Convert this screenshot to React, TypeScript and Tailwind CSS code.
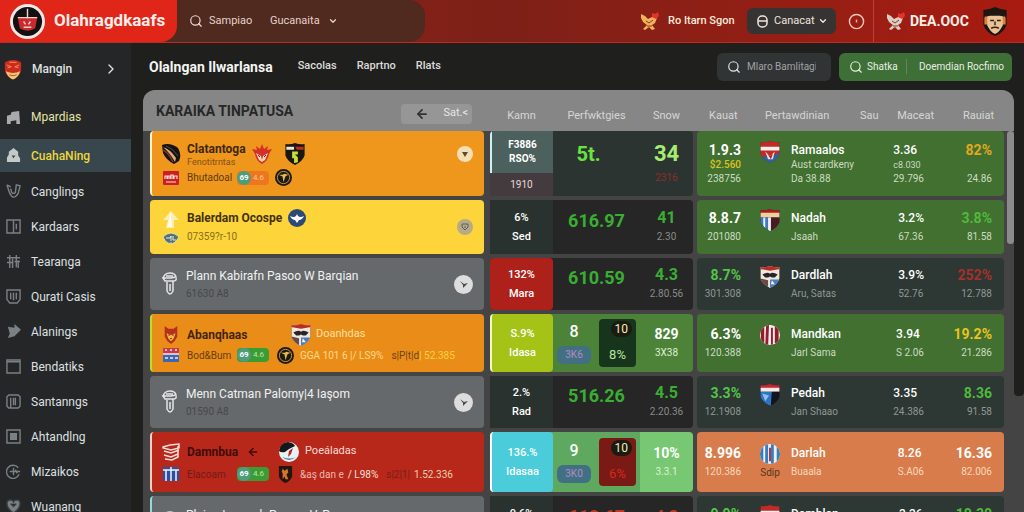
import type { ReactNode } from "react";
import { ArrowLeft, ChevronDown, ChevronRight, Search } from "lucide-react";

type Kind =
  | "redWhite"
  | "blueRed"
  | "eagle"
  | "stripesRed"
  | "halfBlue"
  | "stripesBlue";

const Crest = ({ kind }: { kind: Kind }) => {
  const round = kind === "stripesRed" || kind === "stripesBlue";
  const shape = round
    ? "M11 1a10.500 10.500 0 1 1 0 21a10.500 10.500 0 1 1 0-21Z"
    : "M1 2Q6 3 11 1Q16 3 21 2V14Q19 20 11 24Q3 20 1 14Z";
  return (
    <svg viewBox="0 0 22 25" className="h-6 w-[22px] shrink-0">
      <clipPath id={`crest-${kind}`}>
        <path d={shape} />
      </clipPath>
      <g clipPath={`url(#crest-${kind})`}>
        <rect width="22" height="25" fill={round ? "#f1eef0" : "#20283a"} />
        {kind === "redWhite" && (
          <>
            <rect width="22" height="25" fill="#c22a28" />
            <path d="M0 7H22V11H0Z" fill="#f5f0ea" />
            <path d="M1 15Q8 21 21 13V25H0Z" fill="#2c63a8" />
            <path d="M6 12l5 5 5-5-2 8H9Z" fill="#eddcd2" />
            <path d="M8 14l3 3 3-3-2 6Z" fill="#a51d20" />
          </>
        )}
        {kind === "blueRed" && (
          <>
            <rect width="22" height="6" fill="#a81f1f" />
            <path d="M0 5H22V10H0Z" fill="#f2cf9c" />
            <path d="M0 10H12V24H0Z" fill="#3f79bb" />
            <path d="M4 10H6V23H4ZM9 10H12V24H9Z" fill="#eef2f5" />
            <path d="M12 10H22V24H12Z" fill="#4b1a22" />
          </>
        )}
        {kind === "eagle" && (
          <>
            <rect width="22" height="25" fill="#f2e6d8" />
            <path d="M0 0H22V4L11 6L0 4Z" fill="#b92b27" />
            <path d="M3 10Q8 7 11 9Q14 7 19 10L16 13H13L11 12L9 13H6Z" fill="#28242b" />
            <path d="M1 14L9 16V23H3Z" fill="#6a4a46" />
            <path d="M11 15H21L18 22L11 24Z" fill="#4b7ec0" />
            <path d="M13 16L16 20H12Z" fill="#f3f3f3" />
          </>
        )}
        {kind === "stripesRed" && (
          <path
            d="M1 4L5 1V20H2ZM7 0H10L9 24H6ZM12 4H14V22H12ZM16 1H20V20H16Z"
            fill="#941c2c"
          />
        )}
        {kind === "halfBlue" && (
          <>
            <rect width="22" height="7" fill="#c9242c" />
            <path d="M0 5H22V9H0Z" fill="#f4e9e4" />
            <path d="M0 9H13L12 24L0 19Z" fill="#2f74c4" />
            <path d="M3 11L10 13L6 19Z" fill="#8fc0ec" />
            <path d="M13 9H22V24H12Z" fill="#11151f" />
          </>
        )}
        {kind === "stripesBlue" && (
          <>
            <path
              d="M0 0H4V24H0ZM6 0H9V24H6ZM12 0H15V24H12ZM18 0H22V24H18Z"
              fill="#3480bf"
            />
            <path d="M10 5H12V19H10Z" fill="#a83448" />
          </>
        )}
      </g>
    </svg>
  );
};

const Wings = () => (
  <svg viewBox="0 0 20 20" className="size-5">
    <path d="M1 1Q9 -2 17 4Q21 11 18 17L13 20Q5 16 2 9Z" fill="#151313" />
    <path d="M2 3Q9 5 15 14L14 18Q9 9 2 3Z" fill="#d9ab72" />
    <path d="M2 6Q8 9 12 18" stroke="#83322a" strokeWidth="1.500" fill="none" />
    <path d="M5 2Q12 4 17 12" stroke="#5c4a3c" fill="none" />
  </svg>
);

const Phoenix = () => (
  <svg viewBox="0 0 20 20" className="size-5">
    <path
      d="M10 0L12 5L16 2L15 6L20 5L17 10Q16 17 10 20Q4 17 3 10L0 5L5 6L4 2L8 5Z"
      fill="#d62f2a"
    />
    <path d="M4 9L9 12L10 16L11 12L16 9L13 16L10 18L7 16Z" fill="#f6d9bb" />
    <path d="M6 11l2 2M14 11l-2 2" stroke="#7c1a18" />
  </svg>
);

const DarkShield = () => (
  <svg viewBox="0 0 22 25" className="h-6 w-[22px]">
    <path d="M1 2Q6 3 11 1Q16 3 21 2V14Q19 20 11 24Q3 20 1 14Z" fill="#191712" />
    <path d="M2 5H10V8H2Z" fill="#efe3d8" />
    <path d="M11 5H20V8H13Z" fill="#c32924" />
    <path d="M8 10H14V13H11L14 16V21L10 22V17H8Z" fill="#cbdc38" />
  </svg>
);

const RedTag = () => (
  <svg viewBox="0 0 16 14" className="h-[14px] w-4">
    <rect width="16" height="14" rx="1" fill="#ca2021" />
    <path
      d="M2 8V5h2v3M5 8V5h2v3M8 8V4h2v4M11 8V5h3v3M3 11h10"
      stroke="#f7dcd5"
      strokeWidth="1.200"
      fill="none"
    />
  </svg>
);

const Roundel = () => (
  <svg viewBox="0 0 18 18" className="size-[17px]">
    <circle cx="9" cy="9" r="9" fill="#1d1a16" />
    <circle cx="9" cy="9" r="6.500" fill="none" stroke="#c99a3a" />
    <path d="M4 6L8 8L9 14L11 8L14 6L10 5L8 6Z" fill="#e6b94a" />
  </svg>
);

const LionShield = () => (
  <svg viewBox="0 0 18 18" className="size-[17px]">
    <path d="M2 0H16V11Q14 16 9 18Q4 16 2 11Z" fill="#25150f" />
    <path d="M6 3L8 5L11 3L12 7L10 9L12 14H9L8 11L6 14V8L5 6Z" fill="#d3752b" />
  </svg>
);

const BirdBadge = () => (
  <svg viewBox="0 0 18 18" className="size-[18px]">
    <circle cx="9" cy="9" r="9" fill="#2c4a78" />
    <path d="M2 7Q6 9 8 7L9 5L10 7Q12 9 16 7Q14 11 11 11L9 14L7 11Q4 11 2 7Z" fill="#fff" />
  </svg>
);

const UpArrow = () => (
  <svg viewBox="0 0 20 20" className="size-5">
    <path d="M10 1L18 10H13V18H5L7 10H2Z" fill="#f6eeb4" />
    <path d="M10 1L11 17H6L8 9Z" fill="#fffbe0" />
  </svg>
);

const Oval = () => (
  <svg viewBox="0 0 18 12" className="h-3 w-[18px]">
    <path d="M1 5Q9 -3 17 5Q12 13 9 11Q5 13 1 5Z" fill="#51707a" stroke="#dfe0a8" />
    <path d="M4 6h4l1-2v5M11 4v4h3" stroke="#e8ecd8" fill="none" />
  </svg>
);

const Outline = () => (
  <svg
    viewBox="0 0 18 26"
    className="h-[26px] w-[18px]"
    fill="none"
    stroke="#e4e6e6"
    strokeWidth="1.500"
  >
    <path d="M2 8Q3 2 9 2Q14 2 15 6L10 7H2L4 10H12Q16 10 15 7M5 5H12" />
    <path d="M6 11V20Q9 26 12 20V10M9 13V20" />
  </svg>
);

const Fox = () => (
  <svg viewBox="0 0 18 20" className="h-[18px] w-5">
    <path d="M2 0L6 3H12L16 0V12Q14 17 9 20Q4 17 2 12Z" fill="#b5301f" />
    <path d="M4 8L9 10L14 8L12 14L9 17L6 14Z" fill="#f0bb3c" />
    <path d="M6 10h2M10 10h2M8 14h2" stroke="#6b1b10" />
  </svg>
);

const Flag = ({ tone }: { tone: "red" | "blue" }) => (
  <svg viewBox="0 0 16 14" className="h-[14px] w-4">
    <rect width="16" height="14" fill={tone === "red" ? "#c83b49" : "#2e4fa0"} />
    {tone === "red" ? (
      <>
        <rect y="6" width="16" height="8" fill="#3f66b0" />
        <path d="M0 6H16M2 2h2M7 2h2M12 2h2M2 10h3M7 10h3M12 10h3" stroke="#f3e9ef" strokeWidth="1.500" />
      </>
    ) : (
      <path d="M3 3V14M8 0V14M13 3V14M0 3H16" stroke="#f0f2f7" strokeWidth="1.500" />
    )}
  </svg>
);

const Ball = () => (
  <svg viewBox="0 0 20 20" className="size-5">
    <circle cx="10" cy="10" r="10" fill="#e9f1f3" />
    <path d="M0 9Q1 1 9 0Q15 1 16 4L10 7L6 10Q2 11 0 9Z" fill="#15181b" />
    <path d="M10 9L14 6L12 12L9 15Z" fill="#b3252c" />
    <path d="M3 15Q10 21 17 15Q12 18 3 15Z" fill="#3d7ea0" />
  </svg>
);

const RedStack = () => (
  <svg viewBox="0 0 18 18" className="size-[18px]" fill="none" stroke="#f6dcd8" strokeWidth="1.500">
    <path d="M1 4L8 2L17 1V5L9 7L1 5ZM2 8L9 10L17 7M2 12L9 14L16 11M3 16L10 17L16 14V3" />
  </svg>
);

const TrophyBadge = ({ tone }: { tone: string }) => (
  <svg viewBox="0 0 20 20" className="size-5 shrink-0">
    <path d="M1 3L5 5L8 8L12 6L17 7L15 12L12 14L15 18L12 19L9 16L5 19L3 18L7 14L3 11L1 7Z" fill={tone} />
    <path d="M6 10L9 12L13 9M7 15H12" stroke="#8b3a1e" fill="none" />
    <path d="M12 2L15 3L18 1L19 5L16 8L12 6Z" fill="#e5322b" />
  </svg>
);

const Mascot = () => (
  <svg viewBox="0 0 26 30" className="h-[29px] w-[26px] shrink-0">
    <path d="M1 3Q7 3 13 0Q19 3 25 3V18Q23 26 13 30Q3 26 1 18Z" fill="#1b1613" />
    <path d="M2 12Q2 9 5 8L21 8Q24 9 24 12V18H2Z" fill="#d9823b" />
    <path d="M5 9Q13 6 21 9V19Q18 26 13 28Q8 26 5 19Z" fill="#eac394" />
    <path d="M3 5Q13 1 23 5V10L18 9H8L3 10Z" fill="#201713" />
    <path d="M8 14h4M15 14h4M13 15v4M9 22Q13 20 17 22" stroke="#33211a" strokeWidth="1.500" fill="none" />
  </svg>
);

/* sidebar glyphs, filled or stroked with the current colour */
const glyphs: Record<string, ReactNode> = {
  seat: <path d="M6 2L14 1L15 15H11V11L5 12V15H1V6L5 5Z" fill="currentColor" stroke="none" />,
  house: (
    <>
      <path d="M8 0L13 4V8L15 11V15H1V10L3 7V4Z" fill="currentColor" stroke="none" />
      <path d="M6 8h4l-2 3Z" fill="#37474d" stroke="none" />
    </>
  ),
  medal: <path d="M1 1L4 10Q8 18 13 10L15 2L11 1L10 9Q8 11 6 9L5 5M1 1L5 3" />,
  columns: <path d="M1 1H15V15H1ZM8 1V15M11 5V11" />,
  people: <path d="M1 4H15M4 1V15M7 5V15M11 1V14M13 7V15M1 9H8M9 8H15" />,
  shield: <path d="M1 1H15V11L12 15H4L1 11ZM5 4V11M8 4V12M11 4V11" />,
  pointer: <path d="M2 3L9 4L9 0L16 6L9 13L2 15L4 10Z" fill="currentColor" stroke="none" />,
  box: <path d="M1 1H15V15H1ZM1 3H15" />,
  cards: <path d="M3 1H13L15 3V13L13 15H3L1 13V3ZM5 4V15M8 4V12M10 4V12" />,
  frame: (
    <>
      <path d="M1 1H15V15H1Z" />
      <path d="M5 5H11V11H5Z" fill="currentColor" />
    </>
  ),
  clock: <path d="M13 4A7 7 0 1 0 14 11M8 4V12M4 8H15M10 6L12 10" />,
  heart: (
    <path
      d="M8 15Q1 10 1 5Q1 1 5 1Q7 1 8 3Q9 1 12 1Q15 1 15 5Q15 10 8 15ZM5 5L8 8L11 5"
      fill="currentColor"
      stroke="#3a4145"
    />
  ),
};

const menu = [
  { icon: "medal", label: "Canglings" },
  { icon: "columns", label: "Kardaars" },
  { icon: "people", label: "Tearanga" },
  { icon: "shield", label: "Qurati Casis" },
  { icon: "pointer", label: "Alanings" },
  { icon: "box", label: "Bendatiks" },
  { icon: "cards", label: "Santanngs" },
  { icon: "frame", label: "Ahtandlng" },
  { icon: "clock", label: "Mizaikos" },
  { icon: "heart", label: "Wuanang" },
];

const Glyph = ({ name }: { name: string }) => (
  <svg
    viewBox="0 0 16 16"
    className="size-[15px] shrink-0"
    fill="none"
    stroke="currentColor"
    strokeWidth="1.500"
  >
    {glyphs[name]}
  </svg>
);

const Pill = ({ orange }: { orange?: boolean }) => (
  <span
    className={
      orange
        ? "flex h-[14px] w-8 items-center gap-0.5 rounded bg-[#ee7620] text-[8px] text-[#fbc98f]"
        : "flex h-[14px] w-8 items-center gap-0.5 rounded bg-[#3b9b35] text-[8px] text-[#bfe6a5]"
    }
  >
    <span className="flex size-[14px] items-center justify-center rounded-full bg-[#4d9d7c] font-bold text-white">
      69
    </span>
    4.6
  </span>
);

const Toggle = ({ pale }: { pale?: boolean }) => (
  <button
    type="button"
    aria-label="Expand row"
    className={
      pale
        ? "flex size-[19px] shrink-0 items-center justify-center rounded-full bg-[#dcdddc] text-[#4a4a4a]"
        : "flex size-4 shrink-0 items-center justify-center rounded-full bg-[#f5dfb4] text-[#5c4a2c]"
    }
  >
    <svg viewBox="0 0 10 10" className="size-2.5" fill="currentColor">
      {pale ? <path d="M1 2L5 5L9 4L6 7L4 9L4 6Z" /> : <path d="M2 3H8L5 8Z" />}
    </svg>
  </button>
);

const Plain = ({ title, code }: { title: string; code: string }) => (
  <div className="flex items-center gap-[7px]">
    <Outline />
    <div className="min-w-0 flex-1">
      <div className="text-xs leading-5 text-[#f0f1f1]">{title}</div>
      <div className="text-[10px] leading-4 text-[#45484a]">{code}</div>
    </div>
    <Toggle pale />
  </div>
);

const sub = "text-[10px] leading-[18px]";

type Row = {
  height: string;
  team: ReactNode;
  teamBg: string;
  form: ReactNode;
  formBg: string;
  odds: ReactNode;
  midBg: string;
  score: ReactNode;
  scoreBg?: string;
  rate: [string, string];
  rateColor: string;
  extra?: boolean;
  crest: Kind;
  crestNote?: string;
  club: [string, string];
  market: [string, string];
  result: [string, string];
  resultColor: string;
  bg: string;
  muted: string;
};

const Chips = ({ dark }: { dark: boolean }) => (
  <div className="flex items-center justify-between gap-1.5 px-1">
    <div className="flex flex-col items-center gap-1">
      <span className="text-base leading-5 font-medium text-white">{dark ? "8" : "9"}</span>
      <span className="w-[34px] rounded-md bg-[#417084] text-center text-[10px] leading-[18px] text-[#b58ac2]">
        {dark ? "3K6" : "3K0"}
      </span>
    </div>
    <div
      className={
        dark
          ? "flex h-12 w-[37px] flex-col justify-between rounded bg-[#17341c] py-0.5 text-center text-[#b7e89e]"
          : "flex h-12 w-[37px] flex-col justify-between rounded bg-[#791a15] py-0.5 text-center text-[#d5281f]"
      }
    >
      <span className="mr-1 ml-auto rounded-full bg-[#1c1b12] px-1 text-xs leading-4 text-[#f2eebb]">
        10
      </span>
      <span className="text-[13px] leading-5">{dark ? "8%" : "6%"}</span>
    </div>
  </div>
);

const rows: Row[] = [
  {
    height: "h-[65px]",
    teamBg: "border-l-2 border-[#fff3c4] bg-[#ee971c] pl-[9px]",
    team: (
      <>
        <div className="flex items-center">
          <Wings />
          <div className="ml-1.5 w-[65px]">
            <div className="text-xs leading-4 font-bold text-[#40260c]">Clatantoga</div>
            <div className="text-[9px] leading-[10px] text-[#855015]">Fenotitrntas</div>
          </div>
          <Phoenix />
          <span className="ml-3">
            <DarkShield />
          </span>
          <span className="ml-auto">
            <Toggle />
          </span>
        </div>
        <div className="mt-0.5 flex items-center">
          <span className="ml-0.5 w-6">
            <RedTag />
          </span>
          <span className="w-[50px] text-[10px] leading-4 text-[#5b3a10]">Bhutadoal</span>
          <Pill orange />
          <span className="ml-1.5">
            <Roundel />
          </span>
        </div>
      </>
    ),
    formBg: "",
    form: (
      <div className="flex h-full flex-col overflow-hidden rounded-l-sm text-center">
        <div className="flex flex-1 flex-col justify-center border-l-2 border-[#c9f3ee] bg-[#4c605d] text-[10px] leading-[14px] font-bold text-white">
          <span>F3886</span>
          <span>RSO%</span>
        </div>
        <div className="bg-[#443b3e] text-[10px] leading-[23px] text-[#e9dada]">1910</div>
      </div>
    ),
    midBg: "bg-[#2c3431]",
    odds: <div className="-mt-5 w-full pr-4 text-center text-xl leading-5 font-bold text-[#6be244]">5t.</div>,
    score: (
      <>
        <div className="text-[22px] leading-6 font-bold text-[#a4ee6f]">34</div>
        <div className="mt-1 text-[10px] leading-4 text-[#8f2c27]">2316</div>
      </>
    ),
    rate: ["1.9.3", "238756"],
    rateColor: "text-white",
    extra: true,
    crest: "redWhite",
    club: ["Ramaalos", "Da 38.88"],
    market: ["3.36", "29.796"],
    result: ["82%", "24.86"],
    resultColor: "text-[#e2a81d]",
    bg: "bg-[#417031]",
    muted: "text-[#cbdcc0]",
  },
  {
    height: "h-[54px]",
    teamBg: "bg-[#fdd43a] pl-[11px]",
    team: (
      <div className="flex items-center">
        <div className="flex w-5 flex-col items-center gap-0.5">
          <UpArrow />
          <Oval />
        </div>
        <div className="ml-1.5 flex-1">
          <div className="flex items-center gap-1.5">
            <span className="text-xs leading-5 font-bold text-[#43310c]">Balerdam Ocospe</span>
            <BirdBadge />
          </div>
          <div className="text-[10px] leading-[18px] text-[#84701f]">07359?r-10</div>
        </div>
        <button
          type="button"
          aria-label="Expand row"
          className="flex size-4 items-center justify-center rounded-full bg-[#b5ac86] text-[#5b5e5a]"
        >
          <svg viewBox="0 0 10 10" className="size-2.5" fill="none" stroke="currentColor">
            <path d="M2 2H8V5L5 8L2 5ZM5 4V6" />
          </svg>
        </button>
      </div>
    ),
    formBg: "bg-[#29322f]",
    form: <Form top="6%" bottom="Sed" />,
    midBg: "bg-[#252625]",
    odds: <Odds value="616.97" />,
    score: <Score top="41" bottom="2.30" />,
    rate: ["8.8.7", "201080"],
    rateColor: "text-white",
    crest: "blueRed",
    club: ["Nadah", "Jsaah"],
    market: ["3.2%", "67.36"],
    result: ["3.8%", "81.58"],
    resultColor: "text-[#4fbb3b]",
    bg: "bg-[#417031]",
    muted: "text-[#cbdcc0]",
  },
  {
    height: "h-[52px]",
    teamBg: "bg-[#66696b] pl-[11px]",
    team: <Plain title="Plann Kabirafn Pasoo W Barqian" code="61630 A8" />,
    formBg: "rounded bg-[#ae201a]",
    form: <Form top="132%" bottom="Mara" />,
    midBg: "bg-[#252625]",
    odds: <Odds value="610.59" />,
    score: <Score top="4.3" bottom="2.80.56" />,
    rate: ["8.7%", "301.308"],
    rateColor: "text-[#54c548]",
    crest: "eagle",
    club: ["Dardlah", "Aru, Satas"],
    market: ["3.9%", "52.76"],
    result: ["252%", "12.788"],
    resultColor: "text-[#a72f2a]",
    bg: "bg-[#2d3733]",
    muted: "text-[#8f9894]",
  },
  {
    height: "h-[58px]",
    teamBg: "border-l-2 border-[#b6e02a] bg-[#ea8d18] pl-[9px]",
    team: (
      <>
        <div className="flex items-center">
          <Fox />
          <span className="ml-1.5 w-[103px] text-xs leading-5 font-bold text-[#42250c]">Abanqhaas</span>
          <Crest kind="eagle" />
          <span className="ml-1 text-[11px] text-[#fbe0a4]">Doanhdas</span>
        </div>
        <div className="flex items-center">
          <span className="ml-0.5 w-6">
            <Flag tone="red" />
          </span>
          <span className="w-[50px] text-[10px] text-[#673d10]">Bod&amp;Bum</span>
          <Pill />
          <span className="mr-1.5 ml-2">
            <Roundel />
          </span>
          <span className="text-[10px] text-[#fbd98f]">GGA 101 6 |/ LS9%</span>
          <span className="ml-2 text-[10px] text-[#6b4317]">s|P|t|d</span>
          <span className="text-[10px] text-[#f6d33f]">| 52.385</span>
        </div>
      </>
    ),
    formBg: "rounded border-l-2 border-[#f2f8c8] bg-[#a5c216]",
    form: <Form top="S.9%" bottom="Idasa" />,
    midBg: "bg-[#4d8338]",
    odds: <Chips dark />,
    score: <Score top="829" bottom="3X38" white />,
    rate: ["6.3%", "120.388"],
    rateColor: "text-white",
    crest: "stripesRed",
    club: ["Mandkan", "Jarl Sama"],
    market: ["3.94", "S 2.06"],
    result: ["19.2%", "21.286"],
    resultColor: "text-[#ebc31c]",
    bg: "bg-[#417031]",
    muted: "text-[#cbdcc0]",
  },
  {
    height: "h-[52px]",
    teamBg: "bg-[#66696b] pl-[11px]",
    team: <Plain title="Menn Catman Palomy|4 Iaşom" code="01590 A8" />,
    formBg: "bg-[#29322f]",
    form: <Form top="2.%" bottom="Rad" />,
    midBg: "bg-[#252625]",
    odds: <Odds value="516.26" />,
    score: <Score top="4.5" bottom="2.20.36" />,
    rate: ["3.3%", "12.1908"],
    rateColor: "text-[#54c548]",
    crest: "halfBlue",
    club: ["Pedah", "Jan Shaao"],
    market: ["3.35", "24.386"],
    result: ["8.36", "91.58"],
    resultColor: "text-[#4fbb3b]",
    bg: "bg-[#2d3733]",
    muted: "text-[#8f9894]",
  },
  {
    height: "h-[60px]",
    teamBg: "border-l-2 border-[#f7cfc6] bg-[#b7281b] pl-[9px]",
    team: (
      <>
        <div className="flex items-center">
          <span className="ml-px w-[25px]">
            <RedStack />
          </span>
          <span className="w-[60px] text-xs leading-5 font-bold text-[#3f0e0b]">Damnbua</span>
          <ArrowLeft className="mr-5 size-3 text-[#3f0e0b]" strokeWidth={3} />
          <Ball />
          <span className="ml-1.5 text-[11px] text-[#f8dcd4]">Poeáladas</span>
        </div>
        <div className="mt-1 flex items-center">
          <span className="ml-0.5 w-6">
            <Flag tone="blue" />
          </span>
          <span className="w-[50px] text-[10px] text-[#761a13]">Elacoam</span>
          <Pill />
          <span className="mr-1.5 ml-2">
            <LionShield />
          </span>
          <span className="text-[10px] text-[#efb9ac]">&amp;aş dan e</span>
          <span className="ml-1 text-[10px] text-[#f7e0d9]">/ L98%</span>
          <span className="ml-2 text-[10px] text-[#7c1c14]">s|2|1|</span>
          <span className="ml-1 text-[10px] text-[#f4cda9]">1.52.336</span>
        </div>
      </>
    ),
    formBg: "rounded border-l-2 border-white bg-[#4accda]",
    form: <Form top="136.%" bottom="Idasaa" />,
    midBg: "bg-[#5ea860]",
    odds: <Chips dark={false} />,
    score: <Score top="10%" bottom="3.3.1" white />,
    scoreBg: "bg-[#78c873]",
    rate: ["8.996", "120.386"],
    rateColor: "text-white",
    crest: "stripesBlue",
    crestNote: "Sdip",
    club: ["Darlah", "Buaala"],
    market: ["8.26", "S.A06"],
    result: ["16.36", "82.006"],
    resultColor: "text-white",
    bg: "bg-[#d97c4b]",
    muted: "text-[#f7d8bd]",
  },
  {
    height: "h-[54px]",
    teamBg: "border-l-2 border-[#8fdcd8] bg-[#66696b] pl-[9px]",
    team: <Plain title="Plainn Iamamh Pasom V. Paqam" code="61630 A8" />,
    formBg: "bg-[#29322f]",
    form: <Form top="0.6%" bottom="Sed" />,
    midBg: "bg-[#252625]",
    odds: (
      <div className="-mt-3 w-full text-center text-lg leading-[22px] font-bold text-[#c2371f]">618.67</div>
    ),
    score: <div className="-mt-3 text-base leading-5 font-bold text-[#c2371f]">4.3</div>,
    rate: ["9.9%", "120.386"],
    rateColor: "text-[#54c548]",
    crest: "redWhite",
    club: ["Damhlan", "Aru, Satas"],
    market: ["3.36", "52.76"],
    result: ["10.30", "12.788"],
    resultColor: "text-[#4fbb3b]",
    bg: "bg-[#2d3733]",
    muted: "text-[#8f9894]",
  },
];

function Form({ top, bottom }: { top: string; bottom: string }) {
  return (
    <div className="text-center text-[11px] font-medium text-white">
      <div className="leading-5">{top}</div>
      <div className="leading-[18px]">{bottom}</div>
    </div>
  );
}

function Odds({ value }: { value: string }) {
  return (
    <div className="-mt-3 w-full text-center text-lg leading-[22px] font-bold text-[#39ae32]">{value}</div>
  );
}

function Score({ top, bottom, white }: { top: string; bottom: string; white?: boolean }) {
  return (
    <>
      <div
        className={
          white
            ? "text-sm leading-5 font-bold text-white"
            : "text-base leading-5 font-bold text-[#39ae32]"
        }
      >
        {top}
      </div>
      <div className={white ? `${sub} text-[#dcf0d4]` : `${sub} text-[#898b89]`}>{bottom}</div>
    </>
  );
}

const grid = "grid grid-cols-[334fr_69fr_87fr_53fr_64fr_95fr_32fr_60fr_60fr]";
const cell = "flex min-w-0 flex-col justify-center whitespace-nowrap";
const head = "flex min-w-0 items-center pt-3 text-[11px] font-normal text-[#d6d6d6]";

const TopBar = () => (
  <header className="flex h-[43px] shrink-0 items-center border-b border-[#c02a20] bg-linear-to-r from-[#8f2418] via-[#7e2017] to-[#a81b10]">
    <div className="flex h-full min-w-[425px] items-center rounded-r-2xl bg-[#50291f]">
      <a
        href="#"
        className="flex h-full w-[177px] items-center gap-[9px] rounded-br-2xl bg-[#e02519] pl-2.5 text-[17px] font-bold text-[#fdeeea]"
      >
        <svg viewBox="0 0 36 36" className="size-[35px] shrink-0">
          <circle cx="18" cy="18" r="18" fill="#f2e9e6" />
          <circle cx="18" cy="18" r="15" fill="#121011" />
          <path d="M8 14H28L26 25Q18 30 10 25Z" fill="#c9292b" />
          <path d="M8 14H28M18 5V15M14 18l2 3M21 18l-2 3M14 24h8" stroke="#f0d2cd" strokeWidth="1.500" />
        </svg>
        Olahragdkaafs
      </a>
      <label className="ml-3 flex items-center gap-1.5 text-[#efdcd6]">
        <Search className="size-[14px]" />
        <input
          type="search"
          aria-label="Search"
          placeholder="Sampiao"
          className="w-[61px] text-[11px] placeholder:text-[#e5d3cd]"
        />
      </label>
      <label className="flex items-center text-[#e5d3cd]">
        <select aria-label="Category" className="w-[58px] appearance-none text-[11px]">
          <option>Gucanaita</option>
        </select>
        <ChevronDown className="size-[10px]" strokeWidth={3} />
      </label>
    </div>
    <div className="flex h-full flex-1 items-center justify-end pr-4 text-[#fbe9d9]">
      <TrophyBadge tone="#f0b35c" />
      <a href="#" className="ml-2 w-[79px] text-[11px] font-medium whitespace-nowrap">
        Ro Itarn Sgon
      </a>
      <div className="flex h-[26px] w-[89px] items-center rounded-md bg-[#363433] pl-2.5">
        <svg viewBox="0 0 11 13" className="h-[13px] w-[11px]" fill="none" stroke="#efe5df" strokeWidth="1.500">
          <rect x="1" y="1" width="9" height="11" rx="4" />
          <path d="M1 6H10" />
        </svg>
        <select aria-label="Account" className="ml-1.5 w-[44px] appearance-none text-[11px] text-[#efe5df]">
          <option>Canacat</option>
        </select>
        <ChevronDown className="size-[10px]" strokeWidth={3} />
      </div>
      <button type="button" aria-label="History" className="ml-3 text-[#f2c9b9]">
        <svg viewBox="0 0 18 18" className="size-[17px]" fill="none" stroke="currentColor" strokeWidth="1.500">
          <circle cx="9" cy="9" r="7.500" />
          <path d="M9 7V10" />
        </svg>
      </button>
      <span className="mr-3 ml-2 h-full w-px bg-[#c0402f]" />
      <TrophyBadge tone="#d9cfc6" />
      <span className="ml-1 w-[72px] text-sm font-bold text-[#fbeee8]">DEA.OOC</span>
      <Mascot />
    </div>
  </header>
);

const Sidebar = () => (
  <nav className="w-[131px] shrink-0 bg-[#242628] text-xs text-[#dfe0e0]">
    <a href="#" className="mb-1 flex h-[52px] items-center pr-3 pl-1 font-medium">
      <svg viewBox="0 0 20 22" className="h-[21px] w-[18px]">
        <path d="M1 3Q10 -2 19 3V12Q17 20 10 22Q3 20 1 12Z" fill="#cf2a22" />
        <path d="M3 6l5 2-4 1M17 6l-5 2 4 1M6 3h8" stroke="#f0a24b" fill="none" />
        <path d="M2 13Q10 17 18 13Q16 20 10 22Q4 20 2 13Z" fill="#f1c877" />
        <path d="M6 17Q10 19 14 17" stroke="#a8521f" fill="none" />
      </svg>
      <span className="ml-2.5 flex-1">Mangin</span>
      <ChevronRight className="size-4" />
    </a>
    <a href="#" className="mb-1 flex h-[36px] items-center gap-2.5 pl-1.5 text-[#e5e4a5]">
      <span className="text-[#a9aaab]">
        <Glyph name="seat" />
      </span>
      Mpardias
    </a>
    <a
      href="#"
      aria-current="page"
      className="flex h-[33px] items-center gap-2.5 bg-[#37474d] pl-1.5 font-medium text-[#ebd83c]"
    >
      <span className="text-[#c4c8c6]">
        <Glyph name="house" />
      </span>
      CuahaNing
    </a>
    <ul className="mt-0.5">
      {menu.map((item) => (
        <li key={item.label}>
          <a href="#" className="flex h-[35px] items-center gap-2.5 pl-1.5">
            <span className="text-[#7b8083]">
              <Glyph name={item.icon} />
            </span>
            {item.label}
          </a>
        </li>
      ))}
    </ul>
  </nav>
);

const Toolbar = () => (
  <div className="flex h-[47px] shrink-0 items-center pr-3 pl-[18px] text-[11px] text-[#dcdcda]">
    <h1 className="mr-[25px] text-sm font-bold text-[#f4f4f2]">Olalngan Ilwarlansa</h1>
    <div className="flex gap-5 font-medium">
      <a href="#">Sacolas</a>
      <a href="#">Raprtno</a>
      <a href="#">Rlats</a>
    </div>
    <label className="ml-auto flex h-7 w-[114px] items-center gap-1.5 rounded-md bg-[#313435] pr-1 pl-2.5 text-[#e5e6e5]">
      <Search className="size-[14px] shrink-0" />
      <input
        type="search"
        aria-label="Search teams"
        placeholder="Mlaro Bamlitagi"
        className="w-full min-w-0 text-[10px] placeholder:text-[#a0a3a3]"
      />
    </label>
    <div className="ml-2 flex h-7 w-[173px] items-center rounded-md bg-[#3e6f36] pr-2 pl-2.5 text-[10px] text-[#e7f0e2]">
      <Search className="size-[14px] shrink-0" />
      <button type="button" className="ml-1 w-10 border-r border-[#5f8a58] text-left">
        Shatka
      </button>
      <button type="button" className="flex-1 text-right whitespace-nowrap">
        Doemdian Rocfimo
      </button>
    </div>
  </div>
);

const Board = () => (
  <table className="block min-w-0 flex-1">
    <thead className="block">
      <tr className={`${grid} h-[41px]`}>
        <th className="flex items-center justify-between pr-3 pl-1.5">
          <span className="text-sm font-bold text-[#262828]">KARAIKA TINPATUSA</span>
          <span className="mt-1.5 flex h-5 w-[71px] items-center justify-between rounded bg-[#969696] pr-1 pl-3.5 text-[11px] font-normal text-[#e6e6e6]">
            <button type="button" aria-label="Back">
              <ArrowLeft className="size-3.5 text-[#333]" strokeWidth={3} />
            </button>
            <button type="button">Sat.&lt;</button>
          </span>
        </th>
        <th className={`${head} justify-center pl-1.5`}>Kamn</th>
        <th className={`${head} justify-center`}>Perfwktgies</th>
        <th className={`${head} justify-center`}>Snow</th>
        <th className={`${head} pl-4`}>Kauat</th>
        <th className={`${head} pl-2`}>Pertawdinian</th>
        <th className={`${head} pl-2`}>Sau</th>
        <th className={`${head} justify-end pr-2.5`}>Maceat</th>
        <th className={`${head} justify-end pr-2.5`}>Rauiat</th>
      </tr>
    </thead>
    <tbody className="flex flex-col gap-1">
      {rows.map((row, index) => (
        <tr key={index} className={`${grid} ${row.height}`}>
          <td className={`${cell} rounded pr-[11px] ${row.teamBg}`}>{row.team}</td>
          <td className={`ml-1.5 rounded-l-sm ${row.midBg}`}>
            <div
              className={
                row.formBg ? `flex h-full flex-col justify-center ${row.formBg}` : "h-full"
              }
            >
              {row.form}
            </div>
          </td>
          <td className={`${cell} ${row.midBg}`}>{row.odds}</td>
          <td className={`${cell} items-center rounded-r-sm ${row.scoreBg ?? row.midBg}`}>{row.score}</td>
          <td className={`${cell} ml-1 items-end rounded-l-sm pr-4 ${row.bg}`}>
            <div className={`text-sm leading-5 font-bold ${row.rateColor}`}>{row.rate[0]}</div>
            {row.extra && (
              <div className="text-[10px] leading-[10px] font-medium text-[#dfc221]">$2.560</div>
            )}
            <div className={`${sub} ${row.muted}`}>{row.rate[1]}</div>
          </td>
          <td className={`${cell} ${row.bg}`}>
            <div className="flex gap-2.5 pl-0.5">
              <div className="text-center text-[10px] leading-3 text-[#59331f]">
                <Crest kind={row.crest} />
                {row.crestNote}
              </div>
              <div>
                <div className="text-xs leading-5 font-medium text-white">{row.club[0]}</div>
                {row.extra && (
                  <div className={`text-[10px] leading-[10px] ${row.muted}`}>Aust cardkeny</div>
                )}
                <div className={`${sub} ${row.muted}`}>{row.club[1]}</div>
              </div>
            </div>
          </td>
          <td className={`-z-10 ${row.bg}`}></td>
          <td className={`${cell} items-end pr-5 ${row.bg}`}>
            <div>
              <div className="text-xs leading-5 font-medium text-white">{row.market[0]}</div>
              {row.extra && <div className={`text-[9px] leading-[10px] ${row.muted}`}>c8.030</div>}
              <div className={`${sub} ${row.muted}`}>{row.market[1]}</div>
            </div>
          </td>
          <td className={`${cell} items-end rounded-r-sm pr-3 ${row.bg}`}>
            <div className={`text-sm leading-5 font-bold ${row.resultColor}`}>{row.result[0]}</div>
            {row.extra && <div className="h-2.5" />}
            <div className={`${sub} ${row.muted}`}>{row.result[1]}</div>
          </td>
        </tr>
      ))}
    </tbody>
  </table>
);

const App = () => {
  return (
    <div className="flex h-screen flex-col overflow-hidden bg-[#1f201e] font-['Roboto',sans-serif]">
      <TopBar />
      <div className="flex min-h-0 flex-1">
        <Sidebar />
        <main className="flex min-w-0 flex-1 flex-col overflow-hidden">
          <Toolbar />
          <div className="ml-3 flex min-h-0 flex-1">
            <section className="isolate flex min-w-0 flex-1 overflow-hidden rounded-t-xl bg-linear-to-b from-[#868686] from-[41px] to-[#434443] to-[41px] pl-[7px]">
              <Board />
              <div className="mt-[41px] ml-[3px] h-[113px] w-[7px] rounded-full bg-[#8b8b8b]" />
            </section>
            <div className="w-[10px] bg-[#434443]">
              <div className="h-[306px] rounded-b bg-[#1f201e]" />
            </div>
          </div>
        </main>
      </div>
    </div>
  );
};

export default App;
